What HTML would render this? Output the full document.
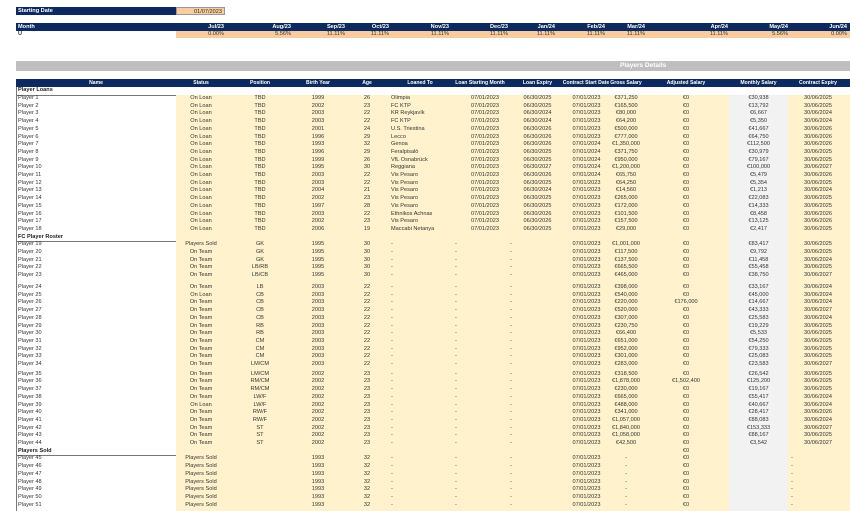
<!DOCTYPE html>
<html><head><meta charset="utf-8"><style>
*{margin:0;padding:0;box-sizing:border-box}
body{width:850px;height:511px;overflow:hidden;background:#fff;font-family:"Liberation Sans",Arial,sans-serif;font-size:5.6px;color:#333;position:relative}
.abs{position:absolute}
.navy{background:#0c2a5e;color:#fff;font-weight:bold}
.r{position:absolute;left:0;width:850px;height:7.7px;line-height:7.7px;white-space:nowrap}
.r span{position:absolute;top:0;overflow:visible}
.n{left:18px}.s{left:176px;width:50px;text-align:center}.p{left:240px;width:40px;text-align:center}
.b{left:298px;width:40px;text-align:center}.a{left:352px;width:30px;text-align:center}
.l{left:391px}.d1{left:455px}.d2{left:510px}
.ls{left:460px;width:50px;text-align:center}.le{left:515px;width:45px;text-align:center}
.cs{left:564px;width:45px;text-align:center}.g{left:606px;width:40px;text-align:center}
.ad{left:656px;width:60px;text-align:center}.m{left:729px;width:59px;text-align:center}
.ce{left:790px;width:56px;text-align:center}.dl{left:791px}
.sec span.n{font-weight:bold;color:#222}
.mh span{position:absolute;text-align:right}
.hdr{font-size:5.1px}
</style></head><body>
<div class="abs navy" style="left:16px;top:7px;width:160px;height:8px;line-height:8px;padding-left:2px">Starting Date</div>
<div class="abs" style="left:176px;top:7px;width:49px;height:8px;line-height:8px;background:#f8cba0;border:1px solid #999;text-align:right;padding-right:2px">01/07/2023</div>
<div class="abs navy mh" style="left:16px;top:23px;width:834px;height:8px;line-height:8px">
<span style="left:2px">Month</span>
<span style="right:626px">Jul/23</span><span style="right:559px">Aug/23</span><span style="right:505px">Sep/23</span><span style="right:461px">Oct/23</span><span style="right:401px">Nov/23</span><span style="right:342px">Dec/23</span><span style="right:295px">Jan/24</span><span style="right:245px">Feb/24</span><span style="right:205px">Mar/24</span><span style="right:122px">Apr/24</span><span style="right:62px">May/24</span><span style="right:3px">Jun/24</span>
</div>
<div class="abs" style="left:176px;top:31px;width:674px;height:7px;background:#f8cba0"></div>
<div class="abs mh" style="left:16px;top:31px;width:834px;height:7px;line-height:7px">
<span style="left:2px;font-weight:bold">U</span>
<span style="right:626px">0.00%</span><span style="right:559px">5.56%</span><span style="right:505px">11.11%</span><span style="right:461px">11.11%</span><span style="right:401px">11.11%</span><span style="right:342px">11.11%</span><span style="right:295px">11.11%</span><span style="right:245px">11.11%</span><span style="right:205px">11.11%</span><span style="right:122px">11.11%</span><span style="right:62px">5.56%</span><span style="right:3px">0.00%</span>
</div>
<div class="abs" style="left:16px;top:61px;width:834px;height:10px;line-height:10px;background:#bfbfbf;color:#fff;font-weight:bold;font-size:6.5px"><span style="position:absolute;left:604px">Players Details</span></div>
<div class="r navy" style="top:79px;left:16px;width:834px;height:8px;line-height:8px"></div>
<div class="r hdr" style="top:79px;color:#fff;font-weight:bold;height:8px;line-height:8px">
<span style="left:16px;width:160px;text-align:center">Name</span><span class="s">Status</span><span class="p">Position</span><span class="b">Birth Year</span><span class="a">Age</span><span style="left:390px;width:60px;text-align:center">Loaned To</span><span style="left:450px;width:60px;text-align:center">Loan Starting Month</span><span class="le">Loan Expiry</span><span style="left:555px;width:62px;text-align:center">Contract Start Date</span><span class="g">Gross Salary</span><span class="ad">Adjusted Salary</span><span class="m">Monthly Salary</span><span class="ce">Contract Expiry</span>
</div>
<div class="abs" style="left:176px;top:95px;width:674px;height:416px;background:#fff2cc"></div>
<div class="abs" style="left:729px;top:95px;width:59px;height:416px;background:#f2f2f2"></div>
<div class="abs" style="left:16px;top:87px;width:1px;height:424px;background:#777"></div>
<div class="abs" style="left:16px;top:95px;width:160px;height:1px;background:#777"></div>
<div class="abs" style="left:16px;top:241px;width:160px;height:1px;background:#777"></div>
<div class="abs" style="left:16px;top:455px;width:160px;height:1px;background:#777"></div>

<div class="r sec" style="top:87px"><span class="n">Player Loans</span></div>
<div class="r" style="top:95px"><span class="n">Player 1</span><span class="s">On Loan</span><span class="p">TBD</span><span class="b">1999</span><span class="a">26</span><span class="l">Olimpia</span><span class="ls">07/01/2023</span><span class="le">06/30/2025</span><span class="cs">07/01/2023</span><span class="g">€371,250</span><span class="ad">€0</span><span class="m">€30,938</span><span class="ce">30/06/2025</span></div>
<div class="r" style="top:102.7px"><span class="n">Player 2</span><span class="s">On Loan</span><span class="p">TBD</span><span class="b">2002</span><span class="a">23</span><span class="l">FC KTP</span><span class="ls">07/01/2023</span><span class="le">06/30/2025</span><span class="cs">07/01/2023</span><span class="g">€165,500</span><span class="ad">€0</span><span class="m">€13,792</span><span class="ce">30/06/2025</span></div>
<div class="r" style="top:110.4px"><span class="n">Player 3</span><span class="s">On Loan</span><span class="p">TBD</span><span class="b">2003</span><span class="a">22</span><span class="l">KR Reykjavík</span><span class="ls">07/01/2023</span><span class="le">06/30/2024</span><span class="cs">07/01/2023</span><span class="g">€80,000</span><span class="ad">€0</span><span class="m">€6,667</span><span class="ce">30/06/2024</span></div>
<div class="r" style="top:118.1px"><span class="n">Player 4</span><span class="s">On Loan</span><span class="p">TBD</span><span class="b">2003</span><span class="a">22</span><span class="l">FC KTP</span><span class="ls">07/01/2023</span><span class="le">06/30/2024</span><span class="cs">07/01/2023</span><span class="g">€64,200</span><span class="ad">€0</span><span class="m">€5,350</span><span class="ce">30/06/2024</span></div>
<div class="r" style="top:125.8px"><span class="n">Player 5</span><span class="s">On Loan</span><span class="p">TBD</span><span class="b">2001</span><span class="a">24</span><span class="l">U.S. Triestina</span><span class="ls">07/01/2023</span><span class="le">06/30/2026</span><span class="cs">07/01/2023</span><span class="g">€500,000</span><span class="ad">€0</span><span class="m">€41,667</span><span class="ce">30/06/2026</span></div>
<div class="r" style="top:133.5px"><span class="n">Player 6</span><span class="s">On Loan</span><span class="p">TBD</span><span class="b">1996</span><span class="a">29</span><span class="l">Lecco</span><span class="ls">07/01/2023</span><span class="le">06/30/2026</span><span class="cs">07/01/2023</span><span class="g">€777,000</span><span class="ad">€0</span><span class="m">€64,750</span><span class="ce">30/06/2026</span></div>
<div class="r" style="top:141.2px"><span class="n">Player 7</span><span class="s">On Loan</span><span class="p">TBD</span><span class="b">1993</span><span class="a">32</span><span class="l">Genoa</span><span class="ls">07/01/2023</span><span class="le">06/30/2026</span><span class="cs">07/01/2024</span><span class="g">€1,350,000</span><span class="ad">€0</span><span class="m">€112,500</span><span class="ce">30/06/2026</span></div>
<div class="r" style="top:148.9px"><span class="n">Player 8</span><span class="s">On Loan</span><span class="p">TBD</span><span class="b">1996</span><span class="a">29</span><span class="l">Feralpisalò</span><span class="ls">07/01/2023</span><span class="le">06/30/2025</span><span class="cs">07/01/2024</span><span class="g">€371,750</span><span class="ad">€0</span><span class="m">€30,979</span><span class="ce">30/06/2025</span></div>
<div class="r" style="top:156.6px"><span class="n">Player 9</span><span class="s">On Loan</span><span class="p">TBD</span><span class="b">1999</span><span class="a">26</span><span class="l">VfL Osnabrück</span><span class="ls">07/01/2023</span><span class="le">06/30/2025</span><span class="cs">07/01/2024</span><span class="g">€950,000</span><span class="ad">€0</span><span class="m">€79,167</span><span class="ce">30/06/2025</span></div>
<div class="r" style="top:164.3px"><span class="n">Player 10</span><span class="s">On Loan</span><span class="p">TBD</span><span class="b">1995</span><span class="a">30</span><span class="l">Reggiana</span><span class="ls">07/01/2023</span><span class="le">06/30/2027</span><span class="cs">07/01/2024</span><span class="g">€1,200,000</span><span class="ad">€0</span><span class="m">€100,000</span><span class="ce">30/06/2027</span></div>
<div class="r" style="top:172px"><span class="n">Player 11</span><span class="s">On Loan</span><span class="p">TBD</span><span class="b">2003</span><span class="a">22</span><span class="l">Vis Pesaro</span><span class="ls">07/01/2023</span><span class="le">06/30/2026</span><span class="cs">07/01/2024</span><span class="g">€65,750</span><span class="ad">€0</span><span class="m">€5,479</span><span class="ce">30/06/2026</span></div>
<div class="r" style="top:179.7px"><span class="n">Player 12</span><span class="s">On Loan</span><span class="p">TBD</span><span class="b">2003</span><span class="a">22</span><span class="l">Vis Pesaro</span><span class="ls">07/01/2023</span><span class="le">06/30/2025</span><span class="cs">07/01/2023</span><span class="g">€64,250</span><span class="ad">€0</span><span class="m">€5,354</span><span class="ce">30/06/2025</span></div>
<div class="r" style="top:187.4px"><span class="n">Player 13</span><span class="s">On Loan</span><span class="p">TBD</span><span class="b">2004</span><span class="a">21</span><span class="l">Vis Pesaro</span><span class="ls">07/01/2023</span><span class="le">06/30/2024</span><span class="cs">07/01/2023</span><span class="g">€14,560</span><span class="ad">€0</span><span class="m">€1,213</span><span class="ce">30/06/2024</span></div>
<div class="r" style="top:195.1px"><span class="n">Player 14</span><span class="s">On Loan</span><span class="p">TBD</span><span class="b">2002</span><span class="a">23</span><span class="l">Vis Pesaro</span><span class="ls">07/01/2023</span><span class="le">06/30/2025</span><span class="cs">07/01/2023</span><span class="g">€265,000</span><span class="ad">€0</span><span class="m">€22,083</span><span class="ce">30/06/2025</span></div>
<div class="r" style="top:202.8px"><span class="n">Player 15</span><span class="s">On Loan</span><span class="p">TBD</span><span class="b">1997</span><span class="a">28</span><span class="l">Vis Pesaro</span><span class="ls">07/01/2023</span><span class="le">06/30/2025</span><span class="cs">07/01/2023</span><span class="g">€172,000</span><span class="ad">€0</span><span class="m">€14,333</span><span class="ce">30/06/2025</span></div>
<div class="r" style="top:210.5px"><span class="n">Player 16</span><span class="s">On Loan</span><span class="p">TBD</span><span class="b">2003</span><span class="a">22</span><span class="l">Ethnikos Achnas</span><span class="ls">07/01/2023</span><span class="le">06/30/2026</span><span class="cs">07/01/2023</span><span class="g">€101,500</span><span class="ad">€0</span><span class="m">€8,458</span><span class="ce">30/06/2026</span></div>
<div class="r" style="top:218.2px"><span class="n">Player 17</span><span class="s">On Loan</span><span class="p">TBD</span><span class="b">2002</span><span class="a">23</span><span class="l">Vis Pesaro</span><span class="ls">07/01/2023</span><span class="le">06/30/2026</span><span class="cs">07/01/2023</span><span class="g">€157,500</span><span class="ad">€0</span><span class="m">€13,125</span><span class="ce">30/06/2026</span></div>
<div class="r" style="top:225.9px"><span class="n">Player 18</span><span class="s">On Loan</span><span class="p">TBD</span><span class="b">2006</span><span class="a">19</span><span class="l">Maccabi Netanya</span><span class="ls">07/01/2023</span><span class="le">06/30/2025</span><span class="cs">07/01/2023</span><span class="g">€29,000</span><span class="ad">€0</span><span class="m">€2,417</span><span class="ce">30/06/2025</span></div>
<div class="r sec" style="top:233.6px"><span class="n">FC Player Roster</span></div>
<div class="r" style="top:241.3px"><span class="n">Player 19</span><span class="s">Players Sold</span><span class="p">GK</span><span class="b">1995</span><span class="a">30</span><span class="l">-</span><span class="d1">-</span><span class="d2">-</span><span class="cs">07/01/2023</span><span class="g">€1,001,000</span><span class="ad">€0</span><span class="m">€83,417</span><span class="ce">30/06/2025</span></div>
<div class="r" style="top:249px"><span class="n">Player 20</span><span class="s">On Team</span><span class="p">GK</span><span class="b">1995</span><span class="a">30</span><span class="l">-</span><span class="d1">-</span><span class="d2">-</span><span class="cs">07/01/2023</span><span class="g">€117,500</span><span class="ad">€0</span><span class="m">€9,792</span><span class="ce">30/06/2025</span></div>
<div class="r" style="top:256.7px"><span class="n">Player 21</span><span class="s">On Team</span><span class="p">GK</span><span class="b">1995</span><span class="a">30</span><span class="l">-</span><span class="d1">-</span><span class="d2">-</span><span class="cs">07/01/2023</span><span class="g">€137,500</span><span class="ad">€0</span><span class="m">€11,458</span><span class="ce">30/06/2024</span></div>
<div class="r" style="top:264.4px"><span class="n">Player 22</span><span class="s">On Team</span><span class="p">LB/RB</span><span class="b">1995</span><span class="a">30</span><span class="l">-</span><span class="d1">-</span><span class="d2">-</span><span class="cs">07/01/2023</span><span class="g">€665,500</span><span class="ad">€0</span><span class="m">€55,458</span><span class="ce">30/06/2025</span></div>
<div class="r" style="top:272.1px"><span class="n">Player 23</span><span class="s">On Team</span><span class="p">LB/CB</span><span class="b">1995</span><span class="a">30</span><span class="l">-</span><span class="d1">-</span><span class="d2">-</span><span class="cs">07/01/2023</span><span class="g">€465,000</span><span class="ad">€0</span><span class="m">€38,750</span><span class="ce">30/06/2027</span></div>
<div class="r" style="top:284px"><span class="n">Player 24</span><span class="s">On Team</span><span class="p">LB</span><span class="b">2003</span><span class="a">22</span><span class="l">-</span><span class="d1">-</span><span class="d2">-</span><span class="cs">07/01/2023</span><span class="g">€398,000</span><span class="ad">€0</span><span class="m">€33,167</span><span class="ce">30/06/2024</span></div>
<div class="r" style="top:291.7px"><span class="n">Player 25</span><span class="s">On Loan</span><span class="p">CB</span><span class="b">2003</span><span class="a">22</span><span class="l">-</span><span class="d1">-</span><span class="d2">-</span><span class="cs">07/01/2023</span><span class="g">€540,000</span><span class="ad">€0</span><span class="m">€45,000</span><span class="ce">30/06/2024</span></div>
<div class="r" style="top:299.4px"><span class="n">Player 26</span><span class="s">On Team</span><span class="p">CB</span><span class="b">2003</span><span class="a">22</span><span class="l">-</span><span class="d1">-</span><span class="d2">-</span><span class="cs">07/01/2023</span><span class="g">€220,000</span><span class="ad">€176,000</span><span class="m">€14,667</span><span class="ce">30/06/2024</span></div>
<div class="r" style="top:307.1px"><span class="n">Player 27</span><span class="s">On Team</span><span class="p">CB</span><span class="b">2003</span><span class="a">22</span><span class="l">-</span><span class="d1">-</span><span class="d2">-</span><span class="cs">07/01/2023</span><span class="g">€520,000</span><span class="ad">€0</span><span class="m">€43,333</span><span class="ce">30/06/2027</span></div>
<div class="r" style="top:314.8px"><span class="n">Player 28</span><span class="s">On Team</span><span class="p">CB</span><span class="b">2003</span><span class="a">22</span><span class="l">-</span><span class="d1">-</span><span class="d2">-</span><span class="cs">07/01/2023</span><span class="g">€307,000</span><span class="ad">€0</span><span class="m">€25,583</span><span class="ce">30/06/2024</span></div>
<div class="r" style="top:322.5px"><span class="n">Player 29</span><span class="s">On Team</span><span class="p">RB</span><span class="b">2003</span><span class="a">22</span><span class="l">-</span><span class="d1">-</span><span class="d2">-</span><span class="cs">07/01/2023</span><span class="g">€230,750</span><span class="ad">€0</span><span class="m">€19,229</span><span class="ce">30/06/2025</span></div>
<div class="r" style="top:330.2px"><span class="n">Player 30</span><span class="s">On Team</span><span class="p">RB</span><span class="b">2003</span><span class="a">22</span><span class="l">-</span><span class="d1">-</span><span class="d2">-</span><span class="cs">07/01/2023</span><span class="g">€66,400</span><span class="ad">€0</span><span class="m">€5,533</span><span class="ce">30/06/2025</span></div>
<div class="r" style="top:337.9px"><span class="n">Player 31</span><span class="s">On Team</span><span class="p">CM</span><span class="b">2003</span><span class="a">22</span><span class="l">-</span><span class="d1">-</span><span class="d2">-</span><span class="cs">07/01/2023</span><span class="g">€651,000</span><span class="ad">€0</span><span class="m">€54,250</span><span class="ce">30/06/2025</span></div>
<div class="r" style="top:345.6px"><span class="n">Player 32</span><span class="s">On Team</span><span class="p">CM</span><span class="b">2003</span><span class="a">22</span><span class="l">-</span><span class="d1">-</span><span class="d2">-</span><span class="cs">07/01/2023</span><span class="g">€952,000</span><span class="ad">€0</span><span class="m">€79,333</span><span class="ce">30/06/2025</span></div>
<div class="r" style="top:353.3px"><span class="n">Player 33</span><span class="s">On Team</span><span class="p">CM</span><span class="b">2003</span><span class="a">22</span><span class="l">-</span><span class="d1">-</span><span class="d2">-</span><span class="cs">07/01/2023</span><span class="g">€301,000</span><span class="ad">€0</span><span class="m">€25,083</span><span class="ce">30/06/2025</span></div>
<div class="r" style="top:361px"><span class="n">Player 34</span><span class="s">On Team</span><span class="p">LM/CM</span><span class="b">2003</span><span class="a">22</span><span class="l">-</span><span class="d1">-</span><span class="d2">-</span><span class="cs">07/01/2023</span><span class="g">€283,000</span><span class="ad">€0</span><span class="m">€23,583</span><span class="ce">30/06/2027</span></div>
<div class="r" style="top:370.7px"><span class="n">Player 35</span><span class="s">On Team</span><span class="p">LM/CM</span><span class="b">2002</span><span class="a">23</span><span class="l">-</span><span class="d1">-</span><span class="d2">-</span><span class="cs">07/01/2023</span><span class="g">€318,500</span><span class="ad">€0</span><span class="m">€26,542</span><span class="ce">30/06/2025</span></div>
<div class="r" style="top:378.4px"><span class="n">Player 36</span><span class="s">On Team</span><span class="p">RM/CM</span><span class="b">2002</span><span class="a">23</span><span class="l">-</span><span class="d1">-</span><span class="d2">-</span><span class="cs">07/01/2023</span><span class="g">€1,878,000</span><span class="ad">€1,502,400</span><span class="m">€125,200</span><span class="ce">30/06/2025</span></div>
<div class="r" style="top:386.1px"><span class="n">Player 37</span><span class="s">On Team</span><span class="p">RM/CM</span><span class="b">2002</span><span class="a">23</span><span class="l">-</span><span class="d1">-</span><span class="d2">-</span><span class="cs">07/01/2023</span><span class="g">€230,000</span><span class="ad">€0</span><span class="m">€19,167</span><span class="ce">30/06/2025</span></div>
<div class="r" style="top:393.8px"><span class="n">Player 38</span><span class="s">On Team</span><span class="p">LW/F</span><span class="b">2002</span><span class="a">23</span><span class="l">-</span><span class="d1">-</span><span class="d2">-</span><span class="cs">07/01/2023</span><span class="g">€665,000</span><span class="ad">€0</span><span class="m">€55,417</span><span class="ce">30/06/2024</span></div>
<div class="r" style="top:401.5px"><span class="n">Player 39</span><span class="s">On Loan</span><span class="p">LW/F</span><span class="b">2002</span><span class="a">23</span><span class="l">-</span><span class="d1">-</span><span class="d2">-</span><span class="cs">07/01/2023</span><span class="g">€488,000</span><span class="ad">€0</span><span class="m">€40,667</span><span class="ce">30/06/2024</span></div>
<div class="r" style="top:409.2px"><span class="n">Player 40</span><span class="s">On Team</span><span class="p">RW/F</span><span class="b">2002</span><span class="a">23</span><span class="l">-</span><span class="d1">-</span><span class="d2">-</span><span class="cs">07/01/2023</span><span class="g">€341,000</span><span class="ad">€0</span><span class="m">€28,417</span><span class="ce">30/06/2026</span></div>
<div class="r" style="top:416.9px"><span class="n">Player 41</span><span class="s">On Team</span><span class="p">RW/F</span><span class="b">2002</span><span class="a">23</span><span class="l">-</span><span class="d1">-</span><span class="d2">-</span><span class="cs">07/01/2023</span><span class="g">€1,057,000</span><span class="ad">€0</span><span class="m">€88,083</span><span class="ce">30/06/2024</span></div>
<div class="r" style="top:424.6px"><span class="n">Player 42</span><span class="s">On Team</span><span class="p">ST</span><span class="b">2002</span><span class="a">23</span><span class="l">-</span><span class="d1">-</span><span class="d2">-</span><span class="cs">07/01/2023</span><span class="g">€1,840,000</span><span class="ad">€0</span><span class="m">€153,333</span><span class="ce">30/06/2027</span></div>
<div class="r" style="top:432.3px"><span class="n">Player 43</span><span class="s">On Team</span><span class="p">ST</span><span class="b">2002</span><span class="a">23</span><span class="l">-</span><span class="d1">-</span><span class="d2">-</span><span class="cs">07/01/2023</span><span class="g">€1,058,000</span><span class="ad">€0</span><span class="m">€88,167</span><span class="ce">30/06/2025</span></div>
<div class="r" style="top:440px"><span class="n">Player 44</span><span class="s">On Team</span><span class="p">ST</span><span class="b">2002</span><span class="a">23</span><span class="l">-</span><span class="d1">-</span><span class="d2">-</span><span class="cs">07/01/2023</span><span class="g">€42,500</span><span class="ad">€0</span><span class="m">€3,542</span><span class="ce">30/06/2027</span></div>
<div class="r sec" style="top:447.7px"><span class="n">Players Sold</span><span class="ad">€0</span></div>
<div class="r" style="top:455.4px"><span class="n">Player 45</span><span class="s">Players Sold</span><span class="b">1993</span><span class="a">32</span><span class="l">-</span><span class="d1">-</span><span class="d2">-</span><span class="cs">07/01/2023</span><span class="g">-</span><span class="ad">€0</span><span class="dl">-</span></div>
<div class="r" style="top:463.1px"><span class="n">Player 46</span><span class="s">Players Sold</span><span class="b">1993</span><span class="a">32</span><span class="l">-</span><span class="d1">-</span><span class="d2">-</span><span class="cs">07/01/2023</span><span class="g">-</span><span class="ad">€0</span><span class="dl">-</span></div>
<div class="r" style="top:470.8px"><span class="n">Player 47</span><span class="s">Players Sold</span><span class="b">1993</span><span class="a">32</span><span class="l">-</span><span class="d1">-</span><span class="d2">-</span><span class="cs">07/01/2023</span><span class="g">-</span><span class="ad">€0</span><span class="dl">-</span></div>
<div class="r" style="top:478.5px"><span class="n">Player 48</span><span class="s">Players Sold</span><span class="b">1993</span><span class="a">32</span><span class="l">-</span><span class="d1">-</span><span class="d2">-</span><span class="cs">07/01/2023</span><span class="g">-</span><span class="ad">€0</span><span class="dl">-</span></div>
<div class="r" style="top:486.2px"><span class="n">Player 49</span><span class="s">Players Sold</span><span class="b">1993</span><span class="a">32</span><span class="l">-</span><span class="d1">-</span><span class="d2">-</span><span class="cs">07/01/2023</span><span class="g">-</span><span class="ad">€0</span><span class="dl">-</span></div>
<div class="r" style="top:493.9px"><span class="n">Player 50</span><span class="s">Players Sold</span><span class="b">1993</span><span class="a">32</span><span class="l">-</span><span class="d1">-</span><span class="d2">-</span><span class="cs">07/01/2023</span><span class="g">-</span><span class="ad">€0</span><span class="dl">-</span></div>
<div class="r" style="top:501.6px"><span class="n">Player 51</span><span class="s">Players Sold</span><span class="b">1993</span><span class="a">32</span><span class="l">-</span><span class="d1">-</span><span class="d2">-</span><span class="cs">07/01/2023</span><span class="g">-</span><span class="ad">€0</span><span class="dl">-</span></div>
</body></html>
